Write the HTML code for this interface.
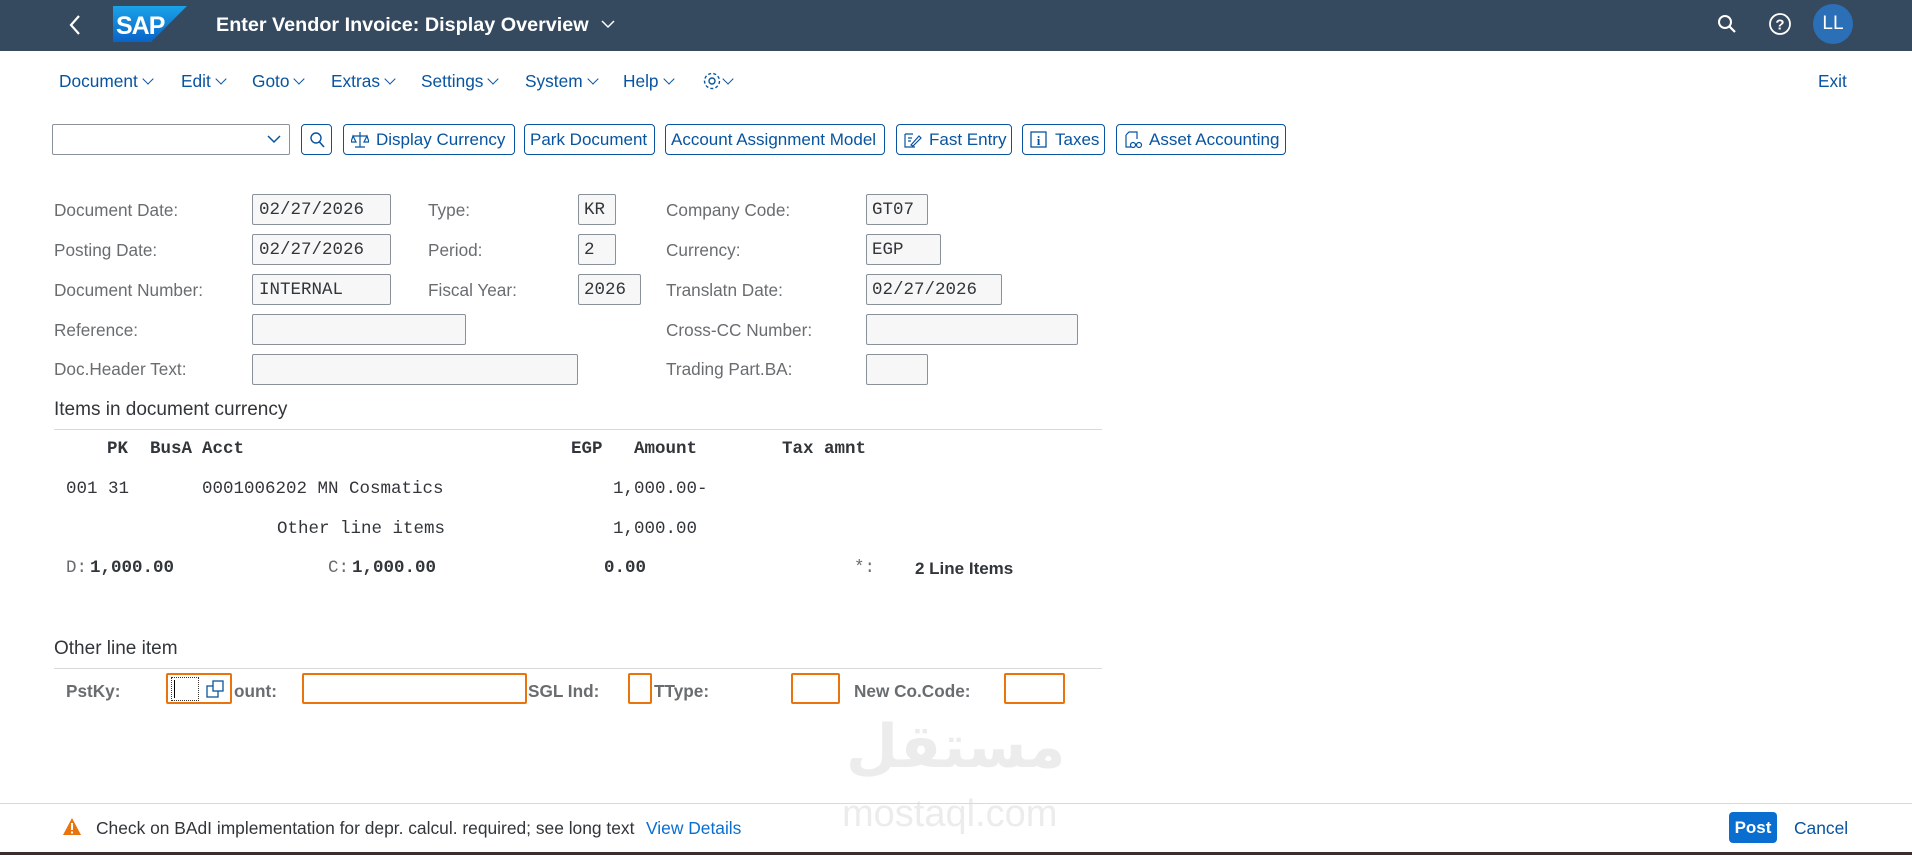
<!DOCTYPE html>
<html><head><meta charset="utf-8"><style>
*{margin:0;padding:0;box-sizing:border-box}
body{width:1912px;height:855px;position:relative;overflow:hidden;background:#fff;font-family:"Liberation Sans",Arial,sans-serif;}
.a{position:absolute;white-space:nowrap}
.hdr{position:absolute;left:0;top:0;width:1912px;height:51px;background:#354a5f}
.menu{color:#0854a0;font-size:17.3px;top:71px}
.chev{display:inline-block;width:8px;height:8px;border-right:1.3px solid #0854a0;border-bottom:1.3px solid #0854a0;transform:rotate(45deg);margin-left:6px;position:relative;top:-4px}
.btn{position:absolute;top:124px;height:31px;border:1px solid #0854a0;border-radius:4px;color:#0854a0;font-size:17px;line-height:30px;padding:0 6px;white-space:nowrap}
.lbl{color:#6a6d70;font-size:17.2px}
.inp{position:absolute;height:31px;border:1px solid #89919a;border-radius:2px;background:#f7f7f7;font-family:"Liberation Mono",monospace;font-size:17.5px;color:#32363a;line-height:30px;padding-left:6px}
.mono{font-family:"Liberation Mono",monospace;font-size:17.5px;color:#32363a}
.b{font-weight:bold}
.ob{position:absolute;top:673px;height:31px;border:2px solid #e9730c;border-radius:2px}
.gl{color:#6a6d70;font-size:17.2px;font-weight:bold;top:681px}
</style></head><body>
<div class="hdr"></div>
<svg class="a" style="left:68px;top:14px" width="14" height="22"><path d="M11 2 L3 11 L11 20" stroke="#fff" stroke-width="2.2" fill="none"/></svg>
<svg class="a" style="left:113px;top:6px" width="75" height="36"><defs><linearGradient id="g" x1="0" y1="0" x2="0" y2="1"><stop offset="0" stop-color="#1aa3e8"/><stop offset="1" stop-color="#0a63c9"/></linearGradient></defs><path d="M0 0 H74 L38 36 H0 Z" fill="url(#g)"/><text x="3" y="28" font-family="Liberation Sans" font-weight="bold" font-size="25" fill="#fff" letter-spacing="-1">SAP</text></svg>
<div class="a" style="left:216px;top:14px;color:#fff;font-size:19.8px;font-weight:bold">Enter Vendor Invoice: Display Overview</div>
<svg class="a" style="left:600px;top:18px" width="16" height="12"><path d="M2 3 L8 9 L14 3" stroke="#fff" stroke-width="1.5" fill="none"/></svg>
<svg class="a" style="left:1716px;top:13px" width="22" height="22"><circle cx="9" cy="9" r="6" stroke="#fff" stroke-width="2" fill="none"/><path d="M13.5 13.5 L19 19" stroke="#fff" stroke-width="2.2"/></svg>
<svg class="a" style="left:1767px;top:11px" width="26" height="26"><circle cx="13" cy="13" r="10" stroke="#fff" stroke-width="1.8" fill="none"/><text x="13" y="18.5" text-anchor="middle" font-family="Liberation Sans" font-weight="bold" font-size="15" fill="#fff">?</text></svg>
<div class="a" style="left:1813px;top:4px;width:40px;height:40px;border-radius:50%;background:#2b6fb6;color:#fff;font-size:19px;line-height:40px;text-align:center">LL</div>

<div class="a menu" style="left:59px">Document<span class="chev"></span></div>
<div class="a menu" style="left:181px">Edit<span class="chev"></span></div>
<div class="a menu" style="left:252px">Goto<span class="chev"></span></div>
<div class="a menu" style="left:331px">Extras<span class="chev"></span></div>
<div class="a menu" style="left:421px">Settings<span class="chev"></span></div>
<div class="a menu" style="left:525px">System<span class="chev"></span></div>
<div class="a menu" style="left:623px">Help<span class="chev"></span></div>
<svg class="a" style="left:701px;top:70px" width="22" height="22"><circle cx="11" cy="11" r="3" stroke="#0854a0" stroke-width="1.4" fill="none"/><circle cx="11" cy="11" r="7.5" stroke="#0854a0" stroke-width="1.4" fill="none" stroke-dasharray="3 2.2"/></svg>
<div class="a menu" style="left:718px"><span class="chev"></span></div>
<div class="a menu" style="left:1818px">Exit</div>

<div class="a" style="left:52px;top:124px;width:238px;height:31px;border:1px solid #89919a;border-radius:2px"></div>
<svg class="a" style="left:266px;top:133px" width="16" height="12"><path d="M2 3 L8 9 L14 3" stroke="#0854a0" stroke-width="1.5" fill="none"/></svg>
<div class="btn" style="left:301px;width:31px"><svg style="position:absolute;left:6px;top:6px" width="18" height="18"><circle cx="8" cy="7" r="5" stroke="#0854a0" stroke-width="1.4" fill="none"/><path d="M11.5 11 L16 16" stroke="#0854a0" stroke-width="1.6"/></svg></div>
<div class="btn" style="left:343px;width:172px;padding-left:32px"><svg style="position:absolute;left:7px;top:6px" width="18" height="18"><path d="M9 1 V16 M4 16 H14 M2 5 H16 M2 5 L0 11 H5 Z M16 5 L13 11 H18 Z" stroke="#0854a0" stroke-width="1.2" fill="none"/></svg>Display Currency</div>
<div class="btn" style="left:524px;width:131px;padding-left:5px">Park Document</div>
<div class="btn" style="left:665px;width:220px;padding-left:5px">Account Assignment Model</div>
<div class="btn" style="left:896px;width:116px;padding-left:32px"><svg style="position:absolute;left:6px;top:6px" width="20" height="18"><path d="M2 3 H10 M2 3 V16 H12 M5 7 H9 M5 10 H8 M8 14 L16 5 L18 7 L10 15 Z" stroke="#0854a0" stroke-width="1.2" fill="none"/></svg>Fast Entry</div>
<div class="btn" style="left:1022px;width:83px;padding-left:32px"><svg style="position:absolute;left:7px;top:6px" width="18" height="18"><rect x="1" y="1" width="15" height="15" stroke="#0854a0" stroke-width="1.3" fill="none"/><text x="8.5" y="14" text-anchor="middle" font-family="Liberation Serif" font-weight="bold" font-size="13" fill="#0854a0">i</text></svg>Taxes</div>
<div class="btn" style="left:1116px;width:170px;padding-left:32px"><svg style="position:absolute;left:6px;top:6px" width="20" height="18"><path d="M3 4 L6 1 H14 V8 M3 4 V16 H8" stroke="#0854a0" stroke-width="1.2" fill="none"/><circle cx="10" cy="14" r="2.5" stroke="#0854a0" stroke-width="1.2" fill="none"/><circle cx="16" cy="14" r="2.5" stroke="#0854a0" stroke-width="1.2" fill="none"/></svg>Asset Accounting</div>

<div class="a lbl" style="left:54px;top:200px">Document Date:</div>
<div class="a lbl" style="left:54px;top:240px">Posting Date:</div>
<div class="a lbl" style="left:54px;top:280px">Document Number:</div>
<div class="a lbl" style="left:54px;top:320px">Reference:</div>
<div class="a lbl" style="left:54px;top:359px">Doc.Header Text:</div>
<div class="inp" style="left:252px;top:194px;width:139px">02/27/2026</div>
<div class="inp" style="left:252px;top:234px;width:139px">02/27/2026</div>
<div class="inp" style="left:252px;top:274px;width:139px">INTERNAL</div>
<div class="inp" style="left:252px;top:314px;width:214px"></div>
<div class="inp" style="left:252px;top:354px;width:326px"></div>
<div class="a lbl" style="left:428px;top:200px">Type:</div>
<div class="a lbl" style="left:428px;top:240px">Period:</div>
<div class="a lbl" style="left:428px;top:280px">Fiscal Year:</div>
<div class="inp" style="left:578px;top:194px;width:38px;padding-left:5px">KR</div>
<div class="inp" style="left:578px;top:234px;width:38px;padding-left:5px">2</div>
<div class="inp" style="left:578px;top:274px;width:63px;padding-left:5px">2026</div>
<div class="a lbl" style="left:666px;top:200px">Company Code:</div>
<div class="a lbl" style="left:666px;top:240px">Currency:</div>
<div class="a lbl" style="left:666px;top:280px">Translatn Date:</div>
<div class="a lbl" style="left:666px;top:320px">Cross-CC Number:</div>
<div class="a lbl" style="left:666px;top:359px">Trading Part.BA:</div>
<div class="inp" style="left:866px;top:194px;width:62px;padding-left:5px">GT07</div>
<div class="inp" style="left:866px;top:234px;width:75px;padding-left:5px">EGP</div>
<div class="inp" style="left:866px;top:274px;width:136px;padding-left:5px">02/27/2026</div>
<div class="inp" style="left:866px;top:314px;width:212px"></div>
<div class="inp" style="left:866px;top:354px;width:62px"></div>

<div class="a" style="left:54px;top:399px;font-size:19px;color:#32363a">Items in document currency</div>
<div class="a" style="left:54px;top:429px;width:1048px;height:1px;background:#d9d9d9"></div>
<div class="a mono b" style="left:107px;top:439px">PK</div>
<div class="a mono b" style="left:150px;top:439px">BusA</div>
<div class="a mono b" style="left:202px;top:439px">Acct</div>
<div class="a mono b" style="left:571px;top:439px">EGP</div>
<div class="a mono b" style="left:634px;top:439px">Amount</div>
<div class="a mono b" style="left:782px;top:439px">Tax amnt</div>
<div class="a mono" style="left:66px;top:479px">001 31</div>
<div class="a mono" style="left:202px;top:479px">0001006202 MN Cosmatics</div>
<div class="a mono" style="left:613px;top:479px">1,000.00-</div>
<div class="a mono" style="left:277px;top:519px">Other line items</div>
<div class="a mono" style="left:613px;top:519px">1,000.00</div>
<div class="a mono" style="left:66px;top:558px;color:#6a6d70">D:</div>
<div class="a mono b" style="left:90px;top:558px">1,000.00</div>
<div class="a mono" style="left:328px;top:558px;color:#6a6d70">C:</div>
<div class="a mono b" style="left:352px;top:558px">1,000.00</div>
<div class="a mono b" style="left:604px;top:558px">0.00</div>
<div class="a mono" style="left:854px;top:558px;color:#6a6d70">*:</div>
<div class="a b" style="left:915px;top:559px;font-size:17px;color:#32363a">2 Line Items</div>

<div class="a" style="left:54px;top:638px;font-size:19px;color:#32363a">Other line item</div>
<div class="a" style="left:54px;top:668px;width:1048px;height:1px;background:#d9d9d9"></div>
<div class="a gl" style="left:66px">PstKy:</div>
<div class="ob" style="left:166px;width:66px"></div>
<div class="a" style="left:171px;top:677px;width:28px;height:24px;border:1px dotted #333"></div>
<div class="a" style="left:174px;top:680px;width:1px;height:18px;background:#000"></div>
<svg class="a" style="left:206px;top:680px" width="20" height="20"><rect x="1" y="6" width="11" height="11" stroke="#0854a0" stroke-width="1.3" fill="#fff"/><rect x="7" y="1" width="10" height="10" stroke="#0854a0" stroke-width="1.3" fill="#fff"/></svg>
<div class="a gl" style="left:234px">ount:</div>
<div class="ob" style="left:302px;width:225px"></div>
<div class="a gl" style="left:528px">SGL Ind:</div>
<div class="ob" style="left:628px;width:24px"></div>
<div class="a gl" style="left:654px">TType:</div>
<div class="ob" style="left:791px;width:49px"></div>
<div class="a gl" style="left:854px">New Co.Code:</div>
<div class="ob" style="left:1004px;width:61px"></div>

<div class="a" style="left:846px;top:712px;font-size:60px;font-weight:bold;color:#ececec;font-family:'DejaVu Sans',sans-serif">مستقل</div>
<div class="a" style="left:842px;top:793px;font-size:38px;color:#ececec">mostaql.com</div>

<div class="a" style="left:0;top:803px;width:1912px;height:1px;background:#d9d9d9"></div>
<svg class="a" style="left:62px;top:817px" width="20" height="20"><path d="M10 1 L19 18 H1 Z" fill="#e9730c"/><rect x="9" y="6" width="2" height="7" fill="#fff"/><rect x="9" y="14.5" width="2" height="2" fill="#fff"/></svg>
<div class="a" style="left:96px;top:818px;font-size:17.4px;color:#32363a">Check on BAdI implementation for depr. calcul. required; see long text</div>
<div class="a" style="left:646px;top:818px;font-size:17.4px;color:#0a6ed1">View Details</div>
<div class="a" style="left:1729px;top:812px;width:48px;height:31px;background:#0a6ed1;border-radius:4px;color:#fff;font-weight:bold;font-size:17px;line-height:31px;text-align:center">Post</div>
<div class="a" style="left:1794px;top:818px;font-size:17.4px;color:#0854a0">Cancel</div>
<div class="a" style="left:0;top:852px;width:1912px;height:3px;background:#3b2e2a"></div>
</body></html>
